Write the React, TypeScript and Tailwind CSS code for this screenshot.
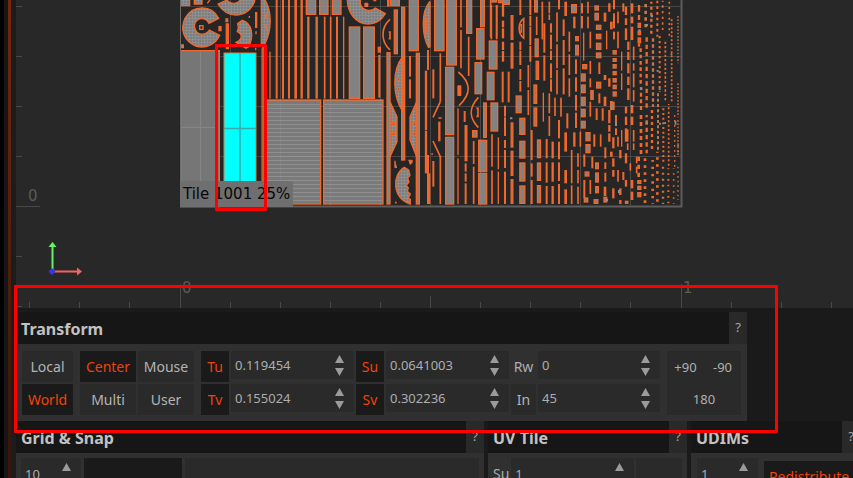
import React from "react";

/* ---------- UV shells: "centre,width:from-to from-to" per column, in thirds of a pixel ---------- */

const WIDE_SHELLS: number[][] = [
  [139, -20, 28, 63], [179, -20, 25, 63], [217, -20, 26, 63],
  [268, 81, 31, 214], [311, 81, 32, 214],
  [392, -10, 26, 27], [448, -10, 27, 162], [524, -10, 28, 162],
  [560, -10, 29, 205], [557, 202, 24, 202], [557, 412, 24, 200],
  [620, -10, 15, 110], [650, 86, 22, 91], [645, 188, 20, 93],
  [688, 123, 23, 84], [682, 217, 20, 82], [693, 309, 20, 84],
  [656, 421, 24, 93], [656, 520, 24, 92], [381, 158, 9, 454],
  [425, 22, 9, 458], [403, 30, 9, 131], [469, 160, 9, 452],
  [671, 309, 8, 103], [638, 392, 13, 19], [662, -10, 11, 90],
  [716, -10, 16, 18], [383, -10, 4, 28], [355, 142, 6, 14],
];

const MID_COLUMNS = `
30,4:155-296
50,6:-5-296
69,6:-5-296
87,6:-5-296
107,8:-5-296
125,7:-5-296
145,7:50-296
170,7:50-296
194,5:50-296
212,5:50-296
231,6:50-296
251,4:50-296
358,6:165-293
450,6:168-230 238-295
504,6:150-210 465-612
498,7:212-300 300-390 392-520
508,6:520-612
520,6:208-295 483-560
541,5:160-305 470-612
538,7:365-424
603,5:-5-82 90-205
594,4:325-465 475-612
614,6:333-366
618,9:375-484
617,6:490-515 520-545 550-612
626,5:110-228
641,5:423-492 500-612
692,5:-5-112
696,5:403-500 511-612
710,5:15-115`;

const FINE_COLUMNS = `
34,5:15-118
50,5:15-118
55,4:412-508 515-612
69,7:15-50 62-82 85-115 125-150 153-185
68,6:215-307
86,6:215-307
75,6:317-350 352-408 420-444 450-504 515-612
121,6:-5-45 125-150 152-195 207-240 243-275
151,6:-5-45 48-78 80-135 138-185
145,5:195-262 270-345
155,6:390-480 490-530 540-612
187,5:5-118
193,6:70-158 166-242
190,4:278-365
208,5:5-40 43-60 280-340 348-408
213,6:70-98 104-148 152-180 190-235 238-275
200,6:417-475 487-548 558-612
218,7:425-475 487-545 558-612
231,5:37-125 133-205 210-283
225,5:293-348
237,6:-5-28 360-415 425-478 487-543 552-612
251,6:58-108 120-195 205-283
243,5:293-350
257,8:5-48 397-455 510-550 568-612
262,6:340-385
268,5:95-155 163-225 235-290
275,5:450-550 556-612
283,7:50-85 397-440
288,6:178-222 232-275 285-332 338-384
294,5:460-500 510-550 560-612
301,5:395-440
306,6:10-40 48-85
311,4:98-182
313,6:463-500 540-595
324,5:5-40 50-85
331,5:95-145 183-222 235-262 305-350 540-582
337,6:470-505
343,6:403-440
350,6:325-360
358,6:187-222 280-310
362,5:403-440
368,6:325-362
375,8:38-65 225-240 290-318 560-588
380,4:92-148
376,6:442-475 487-507 518-545
388,7:10-35 235-260 330-370 375-395 400-425
394,8:65-88 303-330 455-470
402,6:-5-28 40-85 95-118
400,7:412-445 475-500 510-530 565-595
408,6:345-378 385-405
414,5:35-70 95-145 410-440 510-545
421,7:450-475 565-585 600-612
425,4:155-212 220-270 390-440
430,6:10-35 516-540
438,7:20-45 55-75 85-120 320-340 350-375 385-425 460-490 540-560
445,7:125-150 155-180 190-220 230-255 265-300
443,5:388-425 430-450
456,8:10-40 50-70 80-120 315-340 350-375 540-565 575-600
461,5:140-180 190-212 220-262 270-305 390-425 430-450
451,5:490-512
470,5:470-490 500-520
477,7:15-35 45-60 130-140`;

const FILLED_COLUMNS = `
96,9:45-120 128-206 367-443 452-528 537-612
116,19:286-340
127,19:353-405 422-476 487-545 556-612
168,12:-5-38
170,5:50-105
170,13:115-172
172,11:182-240
166,12:253-312 322-380
177,13:418-475 487-543 555-610
282,18:12-40
291,12:108-124 134-167
314,16:192-208
310,15:220-245 253-280 290-318 326-352 362-386
324,16:396-424 432-460
350,14:16-32 38-62
356,17:74-90 101-118 128-150 157-175
356,16:245-266
336,11:270-300
351,12:487-508 517-548 558-580
321,15:514-530
318,14:592-608
348,15:597-612
404,13:150-164 174-186 192-206 213-226 234-248 254-268 274-290
398,12:305-330
478,11:68-84 92-106 112-130
478,13:540-552 557-570 576-592
376,12:590-608
440,11:602-612
78,24:-8-15
43,18:-8-8`;

/* x, width, from, to, dash, gap, offset */
const DOTS: number[][] = [
  [482, 7, 145, 255, 11, 8, 0], [483, 7, 262, 330, 12, 8, 4], [483, 8, 345, 470, 12, 9, 0], [476, 8, 470, 540, 13, 11, 0],
  [497, 8, 12, 90, 10, 10, 0], [500, 7, 112, 330, 13, 9, 0], [500, 7, 345, 460, 13, 9, 6], [495, 8, 475, 612, 8, 13, 0],
  [514, 7, 5, 105, 9, 9, 3], [519, 7, 115, 320, 10, 8, 0], [516, 7, 330, 450, 9, 9, 0], [518, 8, 480, 612, 7, 15, 2],
  [532, 6, 2, 110, 8, 9, 0], [539, 6, 108, 275, 7, 8, 0], [534, 6, 280, 450, 9, 7, 0], [532, 8, 455, 612, 7, 14, 4],
  [548, 5, 2, 90, 7, 10, 3], [556, 5, 125, 305, 7, 6, 0], [550, 6, 325, 490, 6, 8, 0], [549, 7, 500, 612, 6, 12, 0],
  [568, 5, 5, 110, 6, 10, 0], [575, 5, 58, 305, 6, 6, 0], [566, 5, 312, 500, 6, 7, 3], [565, 6, 505, 612, 5, 12, 2],
  [594, 4, 48, 190, 5, 5, 0], [594, 4, 250, 352, 5, 5, 0], [584, 4, 345, 500, 5, 10, 0], [594, 4, 360, 470, 5, 5, 0],
  [581, 5, 505, 612, 4, 14, 3], [594, 4, 500, 600, 5, 9, 0],
];

function parseColumns(text: string) {
  return text
    .trim()
    .split("\n")
    .flatMap((line) => {
      const [head, runs] = line.split(":");
      const [x, w] = head.split(",").map(Number);
      return runs.split(" ").map((run) => {
        const m = run.match(/^(-?\d+)-(-?\d+)$/)!;
        return { x: x - w / 2, w, y: Number(m[1]), h: Number(m[2]) - Number(m[1]) };
      });
    });
}

const ORANGE = "#f2682a";
const SHELL = "#828282";

function Slivers({ data, core }: { data: string; core?: boolean }) {
  return (
    <g>
      {parseColumns(data).map((r, i) =>
        core ? (
          <rect key={i} x={r.x + 2} y={r.y + 2} width={r.w - 4} height={r.h - 4} fill={SHELL} stroke={ORANGE} strokeWidth={4} />
        ) : (
          <rect key={i} x={r.x} y={r.y} width={r.w} height={r.h} fill={ORANGE} />
        ),
      )}
    </g>
  );
}

function UvShells() {
  return (
    <g>
      {/* left block of the tile */}
      <g transform="scale(0.333333)" fill="url(#quads)" stroke={ORANGE} strokeWidth="4">
        <path d="M542-10h27v27h-27zM583-10h23v22h-23zM622 10l12-16" />
        <path d="M656 55C636 14 578 12 555 55c-16 35-3 69 34 84 29 7 58-5 70-33l-31-16c-10 16-34 17-41 1-10-20 4-35 18-35 11 0 17 5 22 14z" />
        <rect x="599" y="77" width="10" height="11" fill="#272727" />
        <path d="M654 12c25 45 88 46 110-8V-10h-40c-2 22-32 27-43 10z" />
        <path d="M727 61c30 8 35 48 19 79l-8 5-30-18c20-9 20-25 4-32l3-12-2-12z" />
        <path d="M679 72h6v74h-6zM657 80h6v12h-6zM678 57h5v8h-5zM767 38h3v44h-3zM748 48v6M544 135h6v8h-6zM768 94v9M767 143v8" />
        <path d="M784-5h8c24 35 25 93 2 138h-10z" />
        <path d="M797 44h4v10h-4zM797 76h4v10h-4z" fill="#272727" />
        <rect x="542" y="152" width="116" height="468" fill="#767676" />
        <path d="M602 154v466M544 382h112" stroke="#898989" strokeWidth="3" />
        <path d="M789 138v480" strokeWidth="5" />
        <path d="M785 145v470" stroke="#8a8178" strokeWidth="2" />
      </g>

      {/* middle block */}
      <g transform="translate(260 0) scale(0.333333)">
        <Slivers data={MID_COLUMNS} />
        <path d="M107-5v290M125-5v290M145 60v230M170 60v230" stroke="#b17c5e" strokeWidth="2" />
        <rect x="15" y="300" width="167" height="312" fill="url(#ribs)" stroke={ORANGE} strokeWidth="4" />
        <rect x="191" y="300" width="178" height="312" fill="url(#ribs)" stroke={ORANGE} strokeWidth="4" />
        {WIDE_SHELLS.map(([x, y, w, h], i) => (
          <rect key={i} x={x} y={y} width={w} height={h} fill={SHELL} stroke={ORANGE} strokeWidth={4} />
        ))}
        <g fill="url(#quads)" stroke={ORANGE} strokeWidth="4" strokeLinejoin="round">
          <path d="M262-8c-2 45 25 80 63 80 20 0 39-11 51-31l-30-17c-12 12-35 9-43-7-4-10-2-20 3-28z" />
          <path d="M315 10h8v9h-8zM342-4h5v6h-5z" fill={ORANGE} />
          <path d="M428 170c-32 40-31 115 0 165z" />
          <path d="M390 305l21 45v75l-21 45zM470 305l-20 45v70l20 50z" />
          <path d="M509 5c-26 30-24 100-3 138l4-3V8z" />
          <rect x="492" y="56" width="8" height="40" />
          <path d="M433 502c-38 22-37 92 18 110v-14l-6-4 6-12-9-8 3-10-6-8 8-10-4-12 7-8-4-16z" />
          <path d="M447 481h9v6l-5 5zM405 482v20h6" />
          <path d="M594 258h8v28h-8z" fill={ORANGE} />
        </g>
        <g fill="#272727" stroke={ORANGE} strokeWidth="4">
          <path d="M413 233h5v8h-5zM413 263h5v8h-5zM398 367h5v9h-5zM398 397h5v9h-5zM460 367h5v9h-5zM460 397h5v9h-5z" />
        </g>
        <g fill="none" stroke={ORANGE} strokeWidth="5">
          <path d="M390 58c-28 24-28 66 0 92M386 96h4v20h-4" />
          <path d="M595 216c38 32 40 65 2 101M655 292c-29 32-29 60 0 91M649 325h5v24h-5" />
          <path d="M541 305l-22 47M519 423l23 49M535 354h10M405 608h5M514 462h5" />
        </g>
      </g>

      {/* fine block on the right */}
      <g transform="translate(480 0) scale(0.333333)">
        <Slivers data={FINE_COLUMNS} />
        <Slivers data={FILLED_COLUMNS} core />
        <path d="M131 56c-18 12-18 45 0 58zM124 72v26" fill="none" stroke={ORANGE} strokeWidth="5" />
        {DOTS.map(([x, w, from, to, dash, gap, off], i) => (
          <line key={i} x1={x} x2={x} y1={from} y2={to} stroke={i % 5 === 4 ? "#c0764e" : ORANGE} strokeWidth={w} strokeDasharray={`${dash} ${gap}`} strokeDashoffset={off} />
        ))}
        <g fill="#8e8e8e">
          <path d="M475 88h7v6h-7zM496 72h8v7h-8zM512 45h7v7h-7zM480 262h7v8h-7zM405 366h6v9h-6zM530 210h6v5h-6zM536 265h6v5h-6zM572 160h5v5h-5zM584 362h5v12h-5zM592 435h5v5h-5zM592 452h5v5h-5zM497 365h7v7h-7zM537 368h6v6h-6zM553 366h5v6h-5zM414 570h7v10h-7zM376 596h8v8h-8zM90 352h7v6h-7z" />
        </g>
      </g>
    </g>
  );
}

/* ---------- UV viewport ---------- */

const ROWS = [6, 56, 106, 156];
const COLS = [230, 280, 330, 380, 430, 480, 530, 580, 630];
const BOTTOM_TICKS = [29, 79, 129, 230, 280, 330, 380, 480, 530, 580, 630, 731, 781, 831];

function Viewport() {
  return (
    <svg className="block h-[308px] w-full bg-[#282828]" viewBox="16 0 837 308" preserveAspectRatio="xMinYMin slice" role="img" aria-label="UV layout">
      <defs>
        <pattern id="ribs" width="12" height="12" patternUnits="userSpaceOnUse">
          <rect width="12" height="12" fill="#7a7a7a" />
          <rect width="12" height="3" fill="#8f8f8f" />
        </pattern>
        <pattern id="quads" width="9" height="9" patternUnits="userSpaceOnUse">
          <rect width="9" height="9" fill="#7e7e7e" />
          <path d="M0 1h9M1 0v9" stroke="#949494" strokeWidth="2" />
        </pattern>
      </defs>
      <path d="M180 0h502v206H180z" fill="#262626" />
      <g stroke="#404040">
        {ROWS.map((y) => <path key={y} d={`M180 ${y}.5H682`} />)}
        {COLS.map((x) => <path key={x} d={`M${x}.5 0V206`} />)}
      </g>
      <UvShells />
      <g stroke="#ffffff" strokeOpacity="0.04">
        {ROWS.map((y) => <path key={y} d={`M260 ${y}.5H682`} />)}
        {COLS.map((x) => <path key={x} d={`M${x}.5 0V206`} />)}
      </g>
      <path d="M180 206.500H681.500V0" fill="none" stroke="#5c5c5c" strokeWidth="2" />
      <path d="M180.500 0V206" stroke="#6b6b6b" />

      {/* selected shell */}
      <rect x="224" y="53" width="32" height="130" fill="#00ffff" stroke="#e07a3c" />
      <path d="M240 53v130M224 128.500h32" stroke="#3aa9a9" strokeWidth="1.500" />

      <rect x="180" y="181" width="113" height="26" fill="#6f6f6f" />
      <text x="183" y="199" fill="#080808" fontSize="15" className="font-['DejaVu_Sans',sans-serif]">Tile 1001 25%</text>

      {/* rulers */}
      <g stroke="#484848">
        {[6, 56, 106, 156, 256, 306].map((y) => <path key={y} d={`M16 ${y}.5h6`} />)}
        <path d="M16 206.500h24M180.500 284v24M681.500 284v24M430.500 296v12" />
        {BOTTOM_TICKS.map((x) => <path key={x} d={`M${x}.5 302v6`} />)}
      </g>
      <g fill="#5a5a5a" fontSize="15" className="font-['DejaVu_Sans',sans-serif]">
        <text x="28" y="201">0</text>
        <text x="182" y="293">0</text>
        <text x="683" y="293">1</text>
      </g>

      {/* axis gizmo */}
      <path d="M52.500 270v-23" stroke="#62f562" strokeWidth="2" />
      <path d="M48.500 247l4-5 4 5z" fill="#62f562" />
      <path d="M54 271.500h24" stroke="#f56262" strokeWidth="2" />
      <path d="M77 267.500l5 4-5 4z" fill="#f56262" />
      <path d="M52 268l3.500 3.500L52 275l-3.500-3.500z" fill="#3434f5" />
    </svg>
  );
}

/* ---------- controls ---------- */

function Toggle({ children, on, className = "" }: { children: React.ReactNode; on?: boolean; className?: string }) {
  return (
    <button
      type="button"
      aria-pressed={!!on}
      className={`flex h-[31px] items-center justify-center text-[14px] leading-5 ${on ? "bg-[#1a1a1a] text-[#ee430c]" : "bg-[#2a2a2a] text-[#b4b4b4]"} ${className}`}
    >
      {children}
    </button>
  );
}

function Arrow({ down }: { down?: boolean }) {
  return (
    <svg className="block h-2 w-[9px]" viewBox="0 0 9 8" aria-hidden="true">
      <path d={down ? "M0 0h9L4.500 8z" : "M0 8h9L4.500 0z"} fill="#9b9b9b" />
    </svg>
  );
}

function Spinner({ label, value }: { label: string; value: string }) {
  return (
    <div className="flex h-7 min-w-0 flex-1 items-center bg-[#2a2a2a] pr-[10px] pl-[4px]">
      <input aria-label={label} defaultValue={value} className="w-full min-w-0 flex-1 bg-transparent text-[13px] leading-5 text-[#adadad] outline-none" />
      <div className="flex flex-col gap-[5px]">
        <button type="button" aria-label={`Increase ${label}`}><Arrow /></button>
        <button type="button" aria-label={`Decrease ${label}`}><Arrow down /></button>
      </div>
    </div>
  );
}

function Pair({ rows, labelWidth, className }: { rows: [string, string, string][]; labelWidth: string; className: string }) {
  return (
    <div className={`flex flex-col gap-[2px] ${className}`}>
      {rows.map(([name, value, kind]) => (
        <div key={name} className="flex gap-[2px]">
          {kind === "label" ? (
            <span className={`flex h-[31px] items-center justify-center text-[14px] leading-5 text-[#adadad] ${labelWidth}`}>{name}</span>
          ) : (
            <Toggle on={kind === "on"} className={labelWidth}>{name}</Toggle>
          )}
          <Spinner label={name} value={value} />
        </div>
      ))}
    </div>
  );
}

function PanelHeader({ title }: { title: string }) {
  return (
    <header className="flex h-8 bg-[#161616]">
      <h2 className="flex-1 truncate pt-[5px] pl-[5px] text-[16px] leading-6 font-bold text-[#c2c2c2]">{title}</h2>
      <button type="button" aria-label={`${title} help`} className="flex w-[18px] items-center justify-center bg-[#292929] text-[13px] text-[#a5a5a5]">?</button>
    </header>
  );
}

function TransformPanel() {
  return (
    <section className="mt-1 w-[731px]">
      <PanelHeader title="Transform" />
      <div className="flex h-[77px] bg-[#303030] px-[6px] pt-[7px]">
        <div className="flex w-[51px] flex-col gap-[2px]">
          <Toggle>Local</Toggle>
          <Toggle on>World</Toggle>
        </div>
        <div className="ml-[7px] grid h-16 w-[114px] grid-cols-2 gap-[2px]">
          <Toggle on>Center</Toggle>
          <Toggle>Mouse</Toggle>
          <Toggle>Multi</Toggle>
          <Toggle>User</Toggle>
        </div>
        <Pair className="ml-[7px] w-[153px]" labelWidth="w-7" rows={[["Tu", "0.119454", "on"], ["Tv", "0.155024", "on"]]} />
        <Pair className="ml-[2px] w-[153px]" labelWidth="w-7" rows={[["Su", "0.0641003", "on"], ["Sv", "0.302236", "on"]]} />
        <Pair className="ml-[2px] w-[149px]" labelWidth="w-[25px]" rows={[["Rw", "0", "label"], ["In", "45", "off"]]} />
        <div className="ml-[7px] grid h-16 flex-1 grid-cols-2 bg-[#2a2a2a] text-[13px] leading-5 text-[#b0b0b0]">
          <button type="button">+90</button>
          <button type="button">-90</button>
          <button type="button" className="col-span-2">180</button>
        </div>
      </div>
    </section>
  );
}

function Stepper({ value, label, className = "" }: { value: string; label: string; className?: string }) {
  return (
    <div className={`flex h-9 items-start bg-[#2a2a2a] pl-[4px] ${className}`}>
      <input aria-label={label} defaultValue={value} className="mt-[6px] w-full min-w-0 flex-1 bg-transparent text-[13px] leading-5 text-[#adadad] outline-none" />
      <button type="button" aria-label={`Increase ${label}`} className="mt-[5px] mr-[10px]"><Arrow /></button>
    </div>
  );
}

function LowerPanels() {
  return (
    <div className="flex gap-1">
      <section className="w-[468px] shrink-0">
        <PanelHeader title="Grid & Snap" />
        <div className="flex h-12 gap-[3px] bg-[#303030] px-[5px] pt-[5px]">
          <Stepper label="Grid size" value="10" className="w-[60px]" />
          <div className="h-9 w-[98px] bg-[#1a1a1a]" />
          <div className="h-9 flex-1 bg-[#2a2a2a]" />
        </div>
      </section>
      <section className="w-[199px] shrink-0">
        <PanelHeader title="UV Tile" />
        <div className="flex h-12 gap-[2px] bg-[#303030] px-[5px] pt-[5px]">
          <span className="pt-[6px] text-[14px] leading-5 text-[#adadad]">Su</span>
          <Stepper label="Tile Su" value="1" className="flex-1" />
          <div className="h-9 w-[46px] bg-[#2a2a2a]" />
        </div>
      </section>
      <section className="w-[169px] shrink-0">
        <PanelHeader title="UDIMs" />
        <div className="flex h-12 gap-[6px] bg-[#303030] px-[6px] pt-[5px]">
          <Stepper label="UDIM count" value="1" className="w-[61px]" />
          <Toggle on className="mt-[3px] flex-1">Redistribute</Toggle>
        </div>
      </section>
    </div>
  );
}

export default function App() {
  return (
    <main className="relative flex h-screen overflow-hidden bg-[#1a1a1a] font-['Noto_Sans',sans-serif]">
      <div className="flex w-4 shrink-0 bg-[#1c1c1c]">
        <div className="w-1 bg-black" />
        <div className="w-1 bg-[#161616]" />
        <div className="w-[3px] bg-linear-to-b from-[#7a2508] to-[#35150c]" />
      </div>
      <div className="min-w-0 flex-1">
        <Viewport />
        <TransformPanel />
        <LowerPanels />
      </div>

      {/* callouts drawn over the interface */}
      <div className="pointer-events-none absolute top-[44px] left-[215px] h-[167px] w-[52px] rounded-[1px] border-[3px] border-[#ff0000]" />
      <div className="pointer-events-none absolute top-[285px] left-[14px] h-[148px] w-[764px] rounded-[1px] border-[3px] border-[#ff0000]" />
    </main>
  );
}
